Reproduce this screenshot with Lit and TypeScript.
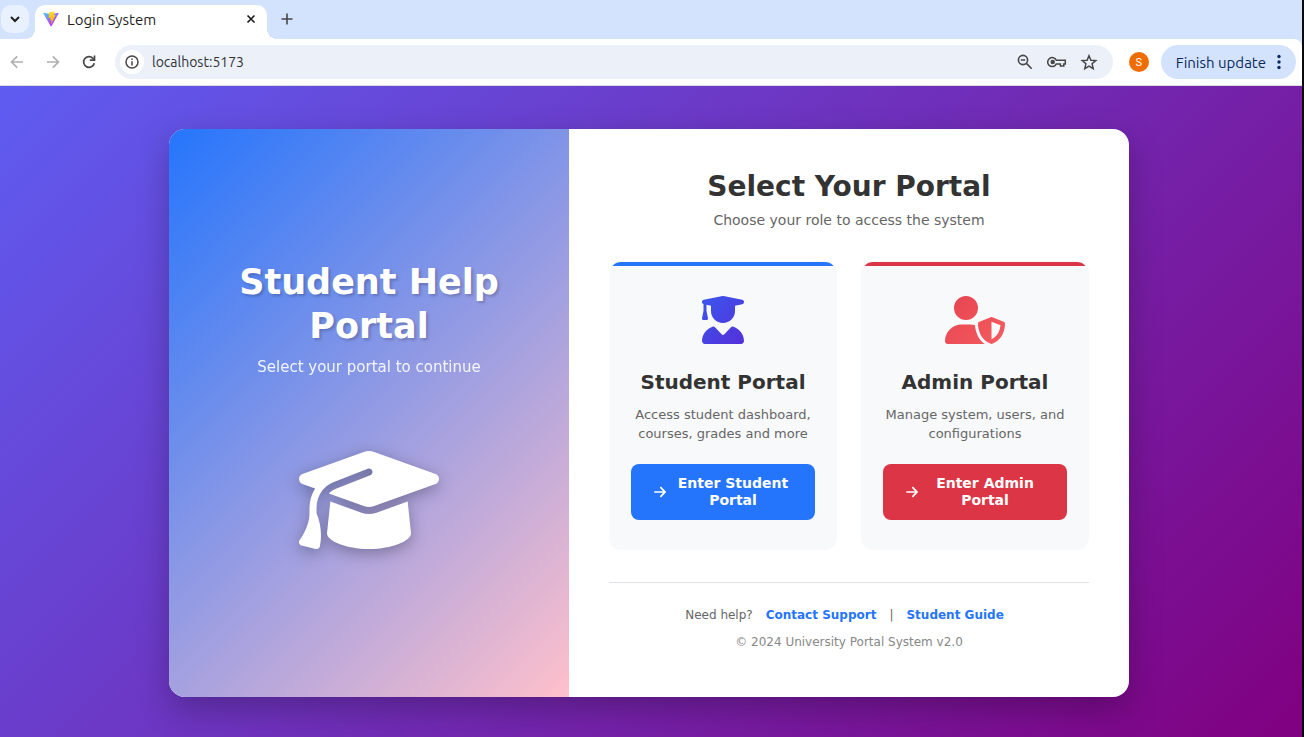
import { LitElement, html, css, svg } from "lit";
import { customElement, property } from "lit/decorators.js";

const capPath =
  "M320 32c-8.1 0-16.1 1.4-23.7 4.1L15.8 137.4C6.3 140.9 0 149.9 0 160s6.3 19.1 15.8 22.6l57.9 20.9C57.3 229.3 48 259.8 48 291.9v28.1c0 28.4-10.8 57.7-22.3 80.8c-6.5 13-13.9 25.8-22.5 37.6C0 442.7-.9 448.3 .9 453.4s6 8.9 11.2 10.2l64 16c4.2 1.1 8.7 .3 12.4-2s6.3-6.1 7.1-10.4c8.6-42.8 4.3-81.2-2.1-108.7C90.3 344.3 86 329.8 80 316.5V291.9c0-30.2 10.2-58.7 27.9-81.5c12.9-15.5 29.6-28 49.2-35.7l157-61.7c8.2-3.2 17.5 .8 20.7 9s-.8 17.5-9 20.7l-157 61.7c-12.4 4.9-23.3 12.4-32.2 21.6l159.6 57.6c7.6 2.7 15.6 4.1 23.7 4.1s16.1-1.4 23.7-4.1L624.2 182.6c9.5-3.4 15.8-12.5 15.8-22.6s-6.3-19.1-15.8-22.6L343.7 36.1C336.1 33.4 328.1 32 320 32zM128 408c0 35.3 86 72 192 72s192-36.7 192-72L496.7 262.6 354.5 314c-11.1 4-22.8 6-34.5 6s-23.5-2-34.5-6L143.3 262.6 128 408z";
const graduatePath =
  "M219.3 .5c3.1-.6 6.3-.6 9.4 0l200 40C439.9 42.7 448 52.6 448 64s-8.1 21.3-19.3 23.5L352 102.9V160c0 70.7-57.3 128-128 128s-128-57.3-128-128V102.9L48 93.3v65.1l15.7 78.4c.9 4.7-.3 9.6-3.3 13.3s-7.6 5.9-12.4 5.9H16c-4.8 0-9.3-2.1-12.4-5.9s-4.3-8.6-3.3-13.3L16 158.4V86.6C6.5 83.3 0 74.3 0 64C0 52.6 8.1 42.7 19.3 40.5l200-40zM111.9 327.7c10.5-3.4 21.8 .4 29.4 8.5l71 75.5c6.3 6.7 17 6.7 23.3 0l71-75.5c7.6-8.1 18.9-11.9 29.4-8.5C401 348.6 448 409.4 448 481.3c0 17-13.8 30.7-30.7 30.7H30.7C13.8 512 0 498.2 0 481.3c0-71.9 47-132.7 111.9-153.6z";
const shieldPath =
  "M224 256A128 128 0 1 0 224 0a128 128 0 1 0 0 256zm-45.7 48C79.8 304 0 383.8 0 482.3C0 498.7 13.3 512 29.7 512H418.3c1.8 0 3.5-.2 5.3-.5c-76.3-55.1-99.8-141-103.1-200.2c-16.1-4.8-33.1-7.3-50.7-7.3H178.3zm308.8-78.3l-120 48C358 277.4 352 286.2 352 296c0 63.3 25.9 168.8 134.8 214.2c5.9 2.5 12.6 2.5 18.5 0C614.1 464.8 640 359.3 640 296c0-9.8-6-18.6-15.1-22.3l-120-48c-5.7-2.3-12.1-2.3-17.8 0zM591.4 312c-3.9 50.7-27.2 116.7-95.4 149.7V273.8L591.4 312z";
const arrowPath =
  "M438.6 278.6c12.5-12.5 12.5-32.8 0-45.3l-160-160c-12.5-12.5-32.8-12.5-45.3 0s-12.5 32.8 0 45.3L338.8 224 32 224c-17.7 0-32 14.3-32 32s14.3 32 32 32l306.7 0L233.4 393.4c-12.5 12.5-12.5 32.8 0 45.3s32.8 12.5 45.3 0l160-160z";

@customElement("browser-bar")
class BrowserBar extends LitElement {
  static styles = css`
    :host {
      display: block;
      font-family: Ubuntu, "Noto Sans", "Open Sans", sans-serif;
      font-size: 15px;
      color: #1f1f1f;
    }
    button {
      border: 0;
      padding: 0;
      margin: 0;
      background: none;
      color: inherit;
      font: inherit;
      display: flex;
      align-items: center;
      justify-content: center;
      flex: none;
    }
    svg {
      display: block;
      flex: none;
    }
    .strip {
      display: flex;
      height: 39px;
      background: #d3e3fd;
    }
    .search {
      width: 28px;
      height: 28px;
      border-radius: 10px;
      background: #e9f1fe;
      margin: 5px 6px 0 1px;
    }
    .tab {
      position: relative;
      display: flex;
      align-items: center;
      width: 232px;
      box-sizing: border-box;
      margin-top: 5px;
      height: 34px;
      padding: 0 8px 6px;
      background: #fff;
      border-radius: 10px 10px 0 0;
    }
    .tab::before,
    .tab::after {
      content: "";
      position: absolute;
      bottom: 0;
      width: 10px;
      height: 10px;
    }
    .tab::before {
      left: -10px;
      background: radial-gradient(circle at 0 0, transparent 10px, #fff 10px);
    }
    .tab::after {
      right: -10px;
      background: radial-gradient(circle at 100% 0, transparent 10px, #fff 10px);
    }
    .name {
      flex: 1;
      margin-left: 8px;
    }
    .plus {
      width: 28px;
      height: 28px;
      margin: 5px 0 0 6px;
      color: #474747;
    }
    .tools {
      display: flex;
      align-items: center;
      height: 46px;
      background: #fff;
      border-bottom: 1px solid #dadce0;
      padding: 0 6px 0 7px;
      border-radius: 0 8px 0 0;
    }
    .back {
      display: flex;
      gap: 16px;
      color: #474747;
      margin-right: 16px;
    }
    .dim {
      color: #b0b0b0;
    }
    .address {
      flex: 1;
      min-width: 0;
      display: flex;
      align-items: center;
      height: 34px;
      border-radius: 17px;
      background: #ecf0f9;
      padding: 0 14px 0 5px;
      color: #474747;
    }
    .info {
      width: 24px;
      height: 24px;
      border-radius: 12px;
      background: #fff;
      margin-right: 8px;
    }
    .url {
      flex: 1;
      min-width: 0;
      border: 0;
      padding: 0;
      background: none;
      font: inherit;
      font-size: 14px;
      color: #303236;
    }
    .marks {
      display: flex;
      gap: 12px;
    }
    .avatar {
      width: 20px;
      height: 20px;
      border-radius: 10px;
      background: #ef6c00;
      color: #fff;
      font: 11px Roboto, sans-serif;
      margin: 0 12px 0 16px;
    }
    .update {
      height: 34px;
      border-radius: 17px;
      background: #d3e3fd;
      color: #0b2a5c;
      padding: 0 15px;
      gap: 11px;
    }
  `;

  render() {
    return html`
      <div class="strip">
        <button class="search" aria-label="Search tabs">
          <svg width="10" height="8" viewBox="0 0 10 8" fill="none" stroke="currentColor" stroke-width="2"><path d="M1 2l4 4 4-4" /></svg>
        </button>
        <div class="tab">
          <svg width="16" height="16" viewBox="0 0 410 404">
            <defs>
              <linearGradient id="v" x1="6" y1="33" x2="235" y2="344" gradientUnits="userSpaceOnUse"><stop stop-color="#41d1ff" /><stop offset="1" stop-color="#bd34fe" /></linearGradient>
              <linearGradient id="b" x1="195" y1="9" x2="236" y2="293" gradientUnits="userSpaceOnUse"><stop stop-color="#ffea83" /><stop offset=".08" stop-color="#ffdd35" /><stop offset="1" stop-color="#ffa800" /></linearGradient>
            </defs>
            <path fill="url(#v)" d="M399.6 59.5L215.6 388.500c-3.800 6.800-13.500 6.800-17.400.1L10.600 59.600c-4.200-7.400 2.100-16.400 10.500-14.900l184.200 32.900c1.200.2 2.400.2 3.500 0l180.300-32.900c8.400-1.500 14.700 7.500 10.500 14.800z" />
            <path fill="url(#b)" d="M293 1.600L156.800 28.300c-2.200.4-3.900 2.300-4 4.600l-8.400 141.400c-.2 3.300 2.900 5.900 6.100 5.200l37.900-8.800c3.500-.8 6.700 2.300 6 5.900l-11.300 55.100c-.8 3.700 2.700 6.900 6.400 5.800l23.400-7.100c3.600-1.100 7.100 2.100 6.400 5.800l-17.900 86.600c-1.100 5.400 6.100 8.400 9.100 3.700l2-3.100 110.900-221.400c1.900-3.700-1.300-7.900-5.400-7.100l-39 7.500c-3.700.7-6.800-2.700-5.800-6.300L298.700 7.900c1-3.600-2.100-7-5.700-6.300z" />
          </svg>
          <span class="name">Login System</span>
          <button aria-label="Close tab">
            <svg width="16" height="16" viewBox="0 0 16 16" fill="none" stroke="currentColor" stroke-width="1.700"><path d="M4.500 4.500l7 7M11.500 4.500l-7 7" /></svg>
          </button>
        </div>
        <button class="plus" aria-label="New tab">
          <svg width="12" height="12" viewBox="0 0 12 12" fill="none" stroke="currentColor" stroke-width="1.600"><path d="M6 .5v11M.5 6h11" /></svg>
        </button>
      </div>
      <div class="tools">
        <div class="back">
          <button class="dim" aria-label="Back">
            <svg width="20" height="20" viewBox="0 0 20 20" fill="none" stroke="currentColor" stroke-width="1.700"><path d="M16 10H5M10.200 4.300L4.500 10l5.700 5.700" /></svg>
          </button>
          <button class="dim" aria-label="Forward">
            <svg width="20" height="20" viewBox="0 0 20 20" fill="none" stroke="currentColor" stroke-width="1.700"><path d="M4 10h11M9.800 4.300l5.700 5.700-5.700 5.700" /></svg>
          </button>
          <button aria-label="Reload">
            <svg width="20" height="20" viewBox="0 0 20 20" fill="none" stroke="currentColor" stroke-width="1.700"><path d="M15.300 11.200A5.400 5.400 0 1 1 14 6.300l1.500 1.500" /><path d="M15.500 3.500v4.700h-4.700" /></svg>
          </button>
        </div>
        <div class="address">
          <button class="info" aria-label="Site information">
            <svg width="14" height="14" viewBox="0 0 14 14" fill="none" stroke="currentColor" stroke-width="1.500"><circle cx="7" cy="7" r="6" /><path d="M7 6.200v4.300M7 3.600v1.500" /></svg>
          </button>
          <input class="url" aria-label="Address" value="localhost:5173" />
          <div class="marks">
            <button aria-label="Zoom">
              <svg width="20" height="20" viewBox="0 0 20 20" fill="none" stroke="currentColor" stroke-width="1.600"><circle cx="8" cy="8" r="4.600" /><path d="M11.400 11.400l5.300 5.300M5.800 8h4.400" /></svg>
            </button>
            <button aria-label="Passwords">
              <svg width="20" height="20" viewBox="0 0 20 20" fill="none" stroke="currentColor" stroke-width="1.500"><path d="M9.300 8.300h9v3.600h-1.500v2.200h-3.400v-2.200H9.300A4.500 4.500 0 1 1 9.300 8.300z" /><circle cx="5.700" cy="10.100" r="1.500" fill="currentColor" /></svg>
            </button>
            <button aria-label="Bookmark">
              <svg width="20" height="20" viewBox="0 0 20 20" fill="none" stroke="currentColor" stroke-width="1.500"><path d="M10 3.700l1.900 4.500 4.900.4-3.700 3.200 1.100 4.800L10 14.100l-4.200 2.500 1.100-4.800-3.700-3.200 4.900-.4z" /></svg>
            </button>
          </div>
        </div>
        <button class="avatar" aria-label="Profile">S</button>
        <button class="update">
          Finish update
          <svg width="4" height="16" viewBox="0 0 4 16" fill="currentColor"><circle cx="2" cy="2.500" r="1.700" /><circle cx="2" cy="8" r="1.700" /><circle cx="2" cy="13.500" r="1.700" /></svg>
        </button>
      </div>
    `;
  }
}

@customElement("portal-card")
class PortalCard extends LitElement {
  @property() kind: "student" | "admin" = "student";
  @property() heading = "";
  @property() text = "";
  @property() action = "";

  static styles = css`
    .card {
      position: relative;
      box-sizing: border-box;
      height: 100%;
      overflow: hidden;
      display: flex;
      flex-direction: column;
      align-items: center;
      text-align: center;
      background: #f8f9fb;
      border: 1px solid transparent;
      border-radius: 12px;
      padding: 34px 21px 29px;
    }
    .card::before {
      content: "";
      position: absolute;
      inset: 0 0 auto;
      height: 4px;
      background: #2575fc;
    }
    .admin::before,
    .admin .go {
      background: #dc3545;
    }
    .icon {
      display: block;
      height: 48px;
    }
    h3 {
      margin: 25px 0 10px;
      font-size: 20px;
      line-height: 26px;
      color: #333;
    }
    p {
      margin: 0 0 21px;
      font-size: 13px;
      line-height: 19px;
      color: #666;
    }
    .go {
      display: flex;
      align-items: center;
      gap: 8px;
      width: 100%;
      box-sizing: border-box;
      border: 0;
      border-radius: 8px;
      padding: 11px 23px;
      margin-top: auto;
      background: #2575fc;
      color: #fff;
      font: bold 14px/17px "DejaVu Sans", sans-serif;
    }
    .arrow {
      flex: none;
      width: 12px;
      height: 14px;
    }
    .label {
      flex: 1;
    }
  `;

  render() {
    const admin = this.kind === "admin";
    const width = admin ? 640 : 448;
    const mid = width / 2;
    return html`
      <article class="card ${this.kind}">
        <svg class="icon" viewBox="0 0 ${width} 512" aria-hidden="true">
          <defs>
            <linearGradient id="tint" gradientUnits="userSpaceOnUse" x1=${mid - 619} y1="-363" x2=${mid + 619} y2="875">
              ${admin
                ? svg`<stop stop-color="#dc3545"/><stop offset="1" stop-color="#ff6b6b"/>`
                : svg`<stop stop-color="#2575fc"/><stop offset="1" stop-color="#6a11cb"/>`}
            </linearGradient>
          </defs>
          <path fill="url(#tint)" d=${admin ? shieldPath : graduatePath} />
        </svg>
        <h3>${this.heading}</h3>
        <p>${this.text}</p>
        <button class="go">
          <svg class="arrow" viewBox="0 0 448 512" fill="currentColor" aria-hidden="true"><path d=${arrowPath} /></svg>
          <span class="label">${this.action}</span>
        </button>
      </article>
    `;
  }
}

@customElement("app-root")
class AppRoot extends LitElement {
  static styles = css`
    :host {
      display: flex;
      flex-direction: column;
      min-height: 100vh;
      box-sizing: border-box;
      border-right: 2px solid #0a0a0c;
      background: #d3e3fd;
      font-family: "DejaVu Sans", sans-serif;
    }
    main {
      flex: 1;
      display: flex;
      align-items: center;
      justify-content: center;
      padding: 20px 20px 17px 16px;
      background: linear-gradient(135deg, #5f5cf1, #800080);
    }
    .panel {
      display: grid;
      grid-template-columns: 5fr 7fr;
      width: 100%;
      max-width: 960px;
      border-radius: 16px;
      overflow: hidden;
      background: #fff;
      box-shadow: 0 12px 32px rgba(0, 0, 0, 0.25);
    }
    .hero {
      display: flex;
      flex-direction: column;
      align-items: center;
      justify-content: center;
      padding: 32px 32px 42px;
      text-align: center;
      color: #fff;
      background: linear-gradient(135deg, #2575fc, #ffc0cb);
    }
    h1 {
      margin: 0 0 10px;
      font-size: 35px;
      line-height: 44px;
      text-shadow: 2px 2px 3px rgba(0, 0, 0, 0.2);
    }
    .lead {
      margin: 0 0 67px;
      font-size: 15px;
      line-height: 19px;
      opacity: 0.9;
    }
    .cap {
      width: 140px;
      height: 112px;
      filter: drop-shadow(0 4px 8px rgba(0, 0, 0, 0.3));
    }
    .choose {
      padding: 40px 40px 47px;
      text-align: center;
    }
    h2 {
      margin: 0 0 8px;
      font-size: 28px;
      line-height: 35px;
      color: #333;
    }
    .sub {
      margin: 0 0 32px;
      font-size: 14px;
      line-height: 17px;
      color: #666;
    }
    .cards {
      display: grid;
      grid-template-columns: 1fr 1fr;
      gap: 24px;
    }
    footer {
      margin-top: 32px;
      padding-top: 24px;
      border-top: 1px solid #e2e3ea;
      font-size: 12px;
      line-height: 16px;
      color: #666;
    }
    .help {
      display: flex;
      justify-content: center;
      gap: 4px;
      margin: 0 0 11px;
    }
    a {
      margin: 0 9px;
      color: #2575fc;
      font-weight: bold;
      text-decoration: none;
    }
    .copy {
      margin: 0;
      color: #888;
    }
  `;

  render() {
    return html`
      <browser-bar></browser-bar>
      <main>
        <div class="panel">
          <section class="hero">
            <h1>Student Help Portal</h1>
            <p class="lead">Select your portal to continue</p>
            <svg class="cap" viewBox="0 0 640 512" fill="#fff" aria-hidden="true"><path d=${capPath} /></svg>
          </section>
          <section class="choose">
            <h2>Select Your Portal</h2>
            <p class="sub">Choose your role to access the system</p>
            <div class="cards">
              <portal-card kind="student" heading="Student Portal" text="Access student dashboard, courses, grades and more" action="Enter Student Portal"></portal-card>
              <portal-card kind="admin" heading="Admin Portal" text="Manage system, users, and configurations" action="Enter Admin Portal"></portal-card>
            </div>
            <footer>
              <p class="help">
                <span>Need help?</span>
                <a href="#support">Contact Support</a>
                <span>|</span>
                <a href="#guide">Student Guide</a>
              </p>
              <p class="copy">© 2024 University Portal System v2.0</p>
            </footer>
          </section>
        </div>
      </main>
    `;
  }
}
